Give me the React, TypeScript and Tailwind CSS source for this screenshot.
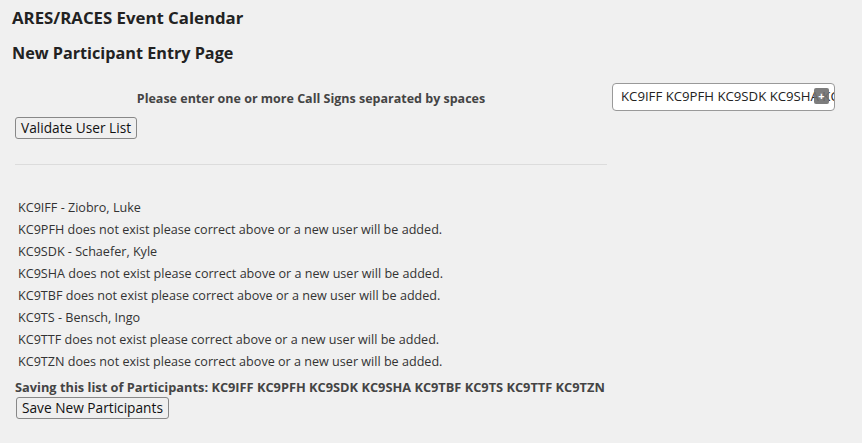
const RESULTS = [
  "KC9IFF - Ziobro, Luke",
  "KC9PFH does not exist please correct above or a new user will be added.",
  "KC9SDK - Schaefer, Kyle",
  "KC9SHA does not exist please correct above or a new user will be added.",
  "KC9TBF does not exist please correct above or a new user will be added.",
  "KC9TS - Bensch, Ingo",
  "KC9TTF does not exist please correct above or a new user will be added.",
  "KC9TZN does not exist please correct above or a new user will be added.",
];

export default function App() {
  return (
    <div className="min-h-[443px] bg-[#f0f0f0] text-[#333] font-['Open_Sans',sans-serif] px-3 pt-[8px]">
      <h1 className="text-[16.8px] font-bold text-[#222] leading-[20px]">ARES/RACES Event Calendar</h1>
      <h2 className="text-[16.2px] font-bold text-[#222] leading-[20px] mt-[15px]">New Participant Entry Page</h2>

      <div className="flex items-start mt-[10px]">
        <div className="w-[595px] pl-[3px]">
          <p className="text-center text-[12.5px] font-bold text-[#444] leading-[16px] mt-[18px]">
            Please enter one or more Call Signs separated by spaces
          </p>
          <button className="mt-[10px] text-[13.7px] text-[#111] leading-[18px] px-[5px] py-[1px] h-[22px] border border-[#888] rounded-[3px] bg-[#efefef]">
            Validate User List
          </button>
          <hr className="mt-[25px] border-0 border-t border-[#dcdcdc]" />
        </div>
        <div className="ml-[5px] mt-[10px] relative w-[223px] h-[28px] bg-white border border-[#999] rounded-[4px] flex items-center overflow-hidden">
          <span className="pl-[8px] text-[13.2px] text-[#222] whitespace-nowrap">KC9IFF KC9PFH KC9SDK KC9SHA KC9TBF</span>
          <span className="absolute right-[5px] top-[4px] w-[15px] h-[16px] rounded-[2px] bg-[#6f6f6f]/90 text-white text-[11px] font-bold leading-[16px] text-center">+</span>
        </div>
      </div>

      <div className="mt-[32px] pl-[6px] text-[12.6px] leading-[22px]">
        {RESULTS.map((r) => (
          <div key={r}>{r}</div>
        ))}
      </div>
      <p className="mt-[6px] pl-[3px] text-[12.8px] font-bold text-[#444] leading-[16px]">
        Saving this list of Participants: KC9IFF KC9PFH KC9SDK KC9SHA KC9TBF KC9TS KC9TTF KC9TZN
      </p>
      <button className="mt-[2px] ml-[4px] text-[13.7px] text-[#111] leading-[18px] px-[5px] py-[1px] h-[22px] border border-[#888] rounded-[3px] bg-[#efefef]">
        Save New Participants
      </button>
    </div>
  );
}
